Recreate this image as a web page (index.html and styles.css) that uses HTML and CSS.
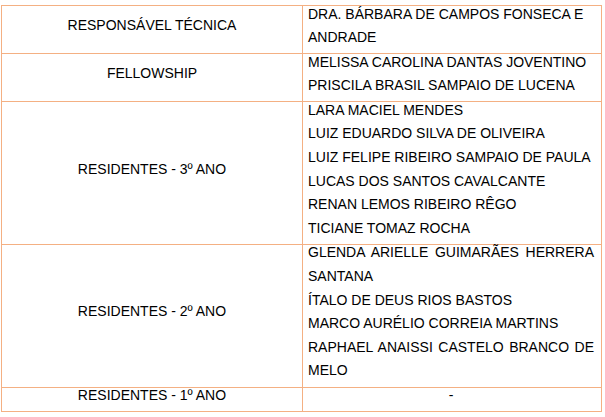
FILE: index.html
```html
<!DOCTYPE html>
<html lang="pt">
<head>
<meta charset="utf-8">
<link rel="stylesheet" href="styles.css">
</head>
<body>
<table class="team">
  <tr>
    <td class="role"><div class="txt">RESPONSÁVEL TÉCNICA</div></td>
    <td class="names left"><div class="txt"><p>DRA. BÁRBARA DE CAMPOS FONSECA E ANDRADE</p></div></td>
  </tr>
  <tr>
    <td class="role"><div class="txt">FELLOWSHIP</div></td>
    <td class="names left"><div class="txt"><p>MELISSA CAROLINA DANTAS JOVENTINO</p><p>PRISCILA BRASIL SAMPAIO DE LUCENA</p></div></td>
  </tr>
  <tr>
    <td class="role"><div class="txt">RESIDENTES - 3º ANO</div></td>
    <td class="names left"><div class="txt">
      <p>LARA MACIEL MENDES</p>
      <p>LUIZ EDUARDO SILVA DE OLIVEIRA</p>
      <p>LUIZ FELIPE RIBEIRO SAMPAIO DE PAULA</p>
      <p>LUCAS DOS SANTOS CAVALCANTE</p>
      <p>RENAN LEMOS RIBEIRO RÊGO</p>
      <p>TICIANE TOMAZ ROCHA</p>
    </div></td>
  </tr>
  <tr>
    <td class="role"><div class="txt">RESIDENTES - 2º ANO</div></td>
    <td class="names"><div class="txt">
      <p>GLENDA ARIELLE GUIMARÃES HERRERA SANTANA</p>
      <p>ÍTALO DE DEUS RIOS BASTOS</p>
      <p>MARCO AURÉLIO CORREIA MARTINS</p>
      <p>RAPHAEL ANAISSI CASTELO BRANCO DE MELO</p>
    </div></td>
  </tr>
  <tr>
    <td class="role"><div class="txt">RESIDENTES - 1º ANO</div></td>
    <td class="names center"><div class="txt">-</div></td>
  </tr>
</table>
</body>
</html>
```
FILE: styles.css
```css
html, body {
  background: #ffffff;
}
body {
  margin: 5px 0 0 1px;
  font-family: "Liberation Sans", Arial, sans-serif;
  font-size: 14px;
  color: #000000;
}
.team {
  border-collapse: collapse;
  width: 601px;
  table-layout: fixed;
}
.team td {
  border: 1px solid #f4b083;
  padding: 0;
  vertical-align: middle;
  line-height: 23.6px;
}
.team td.role {
  width: 300px;
  text-align: center;
}
.team td.names {
  padding: 0 7px 0 5px;
  text-align: justify;
}
.team td.names.left {
  text-align: left;
}
.team td.names.center {
  text-align: center;
}
.txt {
  margin: -3.5px 0 3.5px;
}
.txt p {
  margin: 0;
}
```
